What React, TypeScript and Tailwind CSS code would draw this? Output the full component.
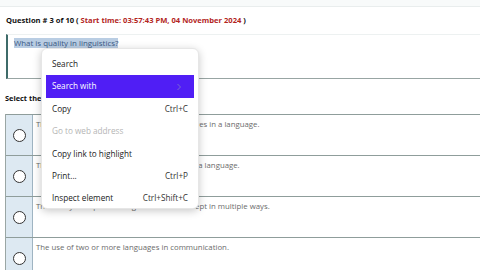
import React from 'react';

const options = [
  'The study of the sound patterns and structures in a language.',
  'The rules that govern sentence structures in a language.',
  'The ability to express a single idea or a concept in multiple ways.',
  'The use of two or more languages in communication.',
];

const menuItems = [
  { label: 'Search', shortcut: '' },
  { label: 'Search with', shortcut: '', active: true, arrow: true },
  { label: 'Copy', shortcut: 'Ctrl+C' },
  { label: 'Go to web address', shortcut: '', disabled: true },
  { label: 'Copy link to highlight', shortcut: '' },
  { label: 'Print...', shortcut: 'Ctrl+P' },
  { label: 'Inspect element', shortcut: 'Ctrl+Shift+C' },
];

const App: React.FC = () => {
  return (
    <div className="relative w-[480px] h-[270px] overflow-hidden bg-white font-['Open_Sans',sans-serif]">
      {/* top strip */}
      <div className="h-[7px] bg-[#f8fafa] border-b border-[#e9eded]" />

      {/* header */}
      <div className="pl-[6px] pt-[8px] h-[27px] text-[7.6px] leading-[10px] font-bold text-[#111] whitespace-nowrap">
        Question # 3 of 10 ({' '}
        <span className="text-[#b3261e]">Start time: 03:57:43 PM, 04 November 2024</span> )
      </div>

      {/* question box */}
      <div className="ml-[6px] h-[45px] border-l-2 border-[#3e6b69] border-t border-t-[#edf1f1] border-b border-b-[#98a5a3] pl-[6px] pt-[3px] text-[7.9px] leading-[10px]">
        <span className="bg-[#b9cde3] text-[#3b5a86]">What is quality in linguistics?</span>
      </div>

      {/* prompt */}
      <div className="pl-[5px] pt-[14px] h-[35px] text-[7.4px] leading-[10px] font-bold text-[#111]">
        Select the correct option:
      </div>

      {/* options */}
      <div className="ml-[5px] border-l border-[#9aa6a4]">
        {options.map((opt, i) => (
          <div key={i} className="flex h-[41px] border-t border-[#8f9d9b]">
            <div className="w-[27px] shrink-0 bg-[#dde9f2] border-r border-[#9fb4c2] flex items-center justify-center">
              <div className="w-[13px] h-[13px] rounded-full border border-[#333] bg-white" />
            </div>
            <div className="pl-[3px] pt-[4px] text-[7.8px] leading-[10px] text-[#6b6b6b] whitespace-nowrap">{opt}</div>
          </div>
        ))}
      </div>

      {/* context menu overlay */}
      <div className="absolute left-[41px] top-[48px] w-[158px] h-[161px] bg-white rounded-[6px] shadow-[0_2px_8px_rgba(0,0,0,0.22)] border border-[#e6e6e6] p-[4px]">
        {menuItems.map((item, i) => (
          <div
            key={i}
            className={`flex items-center justify-between h-[22.4px] px-[6px] text-[8.2px] ${
              item.active ? 'bg-[#501ef5] text-white' : item.disabled ? 'text-[#b5b5b5]' : 'text-[#222]'
            }`}
          >
            <span>{item.label}</span>
            {item.arrow && (
              <svg width="6" height="8" viewBox="0 0 6 8" className="mr-[6px]">
                <path d="M1.5 1 L4.5 4 L1.5 7" stroke="#7a6ad0" strokeWidth="1" fill="none" />
              </svg>
            )}
            {item.shortcut && <span className="text-[#333]">{item.shortcut}</span>}
          </div>
        ))}
      </div>
    </div>
  );
};

export default App;
